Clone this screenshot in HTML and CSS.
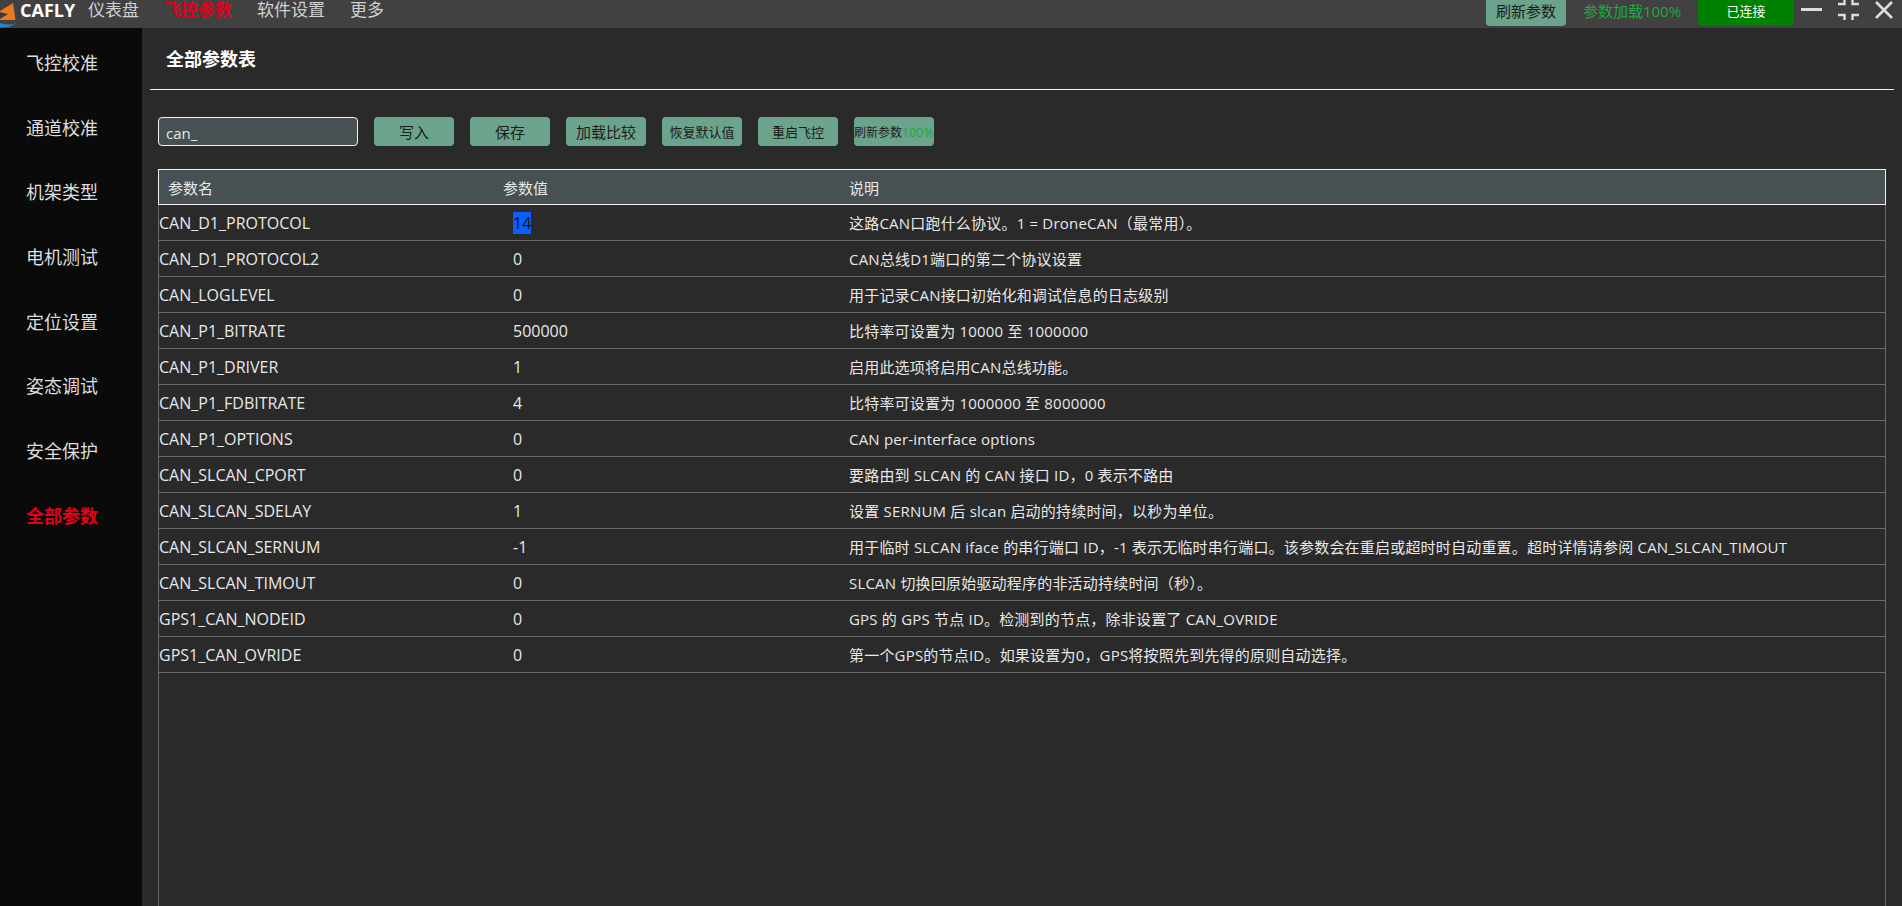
FILE: index.html
```html
<!DOCTYPE html>
<html lang="zh-CN">
<head>
  <meta charset="UTF-8">
  <title>CAFLY</title>
  <link rel="stylesheet" href="styles.css">
</head>
<body>
  <div class="top-bar">
    <div class="logo">
      <svg class="logo-mark" width="16" height="28" viewBox="0 0 16 28">
        <path d="M13 3 L15.5 20 L0 20 L0 18 L7 14 L0 12 L0 11 Z" fill="#e8791f"/>
        <path d="M0 13 L8 14 L0 19 Z" fill="#3b3b3b"/>
        <path d="M0 23 Q9 26 16 23 Q10 28 0 27.5 Z" fill="#1f86c4"/>
      </svg>
      <span>CAFLY</span>
    </div>
    <div class="top-nav">
      <span>仪表盘</span>
      <span class="active">飞控参数</span>
      <span>软件设置</span>
      <span>更多</span>
    </div>
    <div class="top-right">
      <div class="refresh-btn">刷新参数</div>
      <div class="load-status">参数加载100%</div>
      <div class="connected">已连接</div>
      <div class="win-btns">
        <svg width="21" height="20" viewBox="0 0 21 20"><path d="M0 9.5H21" stroke="#dcdcdc" stroke-width="3" fill="none"/></svg>
        <svg width="22" height="20" viewBox="0 0 22 20"><path d="M0 4H6.5V0M21 4H14.5V0M0 15H6.5V20M21 15H14.5V20" stroke="#dcdcdc" stroke-width="2.4" fill="none"/></svg>
        <svg width="18" height="20" viewBox="0 0 18 20"><path d="M1 2L17 18M17 2L1 18" stroke="#dcdcdc" stroke-width="2.6" fill="none"/></svg>
      </div>
    </div>
  </div>

  <div class="body-row">
    <div class="side-nav">
      <div class="side-item">飞控校准</div>
      <div class="side-item">通道校准</div>
      <div class="side-item">机架类型</div>
      <div class="side-item">电机测试</div>
      <div class="side-item">定位设置</div>
      <div class="side-item">姿态调试</div>
      <div class="side-item">安全保护</div>
      <div class="side-item active">全部参数</div>
    </div>

    <div class="content">
      <div class="page-title">全部参数表</div>
      <div class="tool-row">
        <input class="search" type="text" value="can_">
        <button class="tool-btn">写入</button>
        <button class="tool-btn">保存</button>
        <button class="tool-btn">加载比较</button>
        <button class="tool-btn small">恢复默认值</button>
        <button class="tool-btn small">重启飞控</button>
        <button class="tool-btn tiny">刷新参数<span class="pct">100%</span></button>
      </div>

      <div class="table-box">
        <table class="param-table">
          <thead>
            <tr><th class="col-name">参数名</th><th class="col-value">参数值</th><th>说明</th></tr>
          </thead>
          <tbody>
            <tr><td>CAN_D1_PROTOCOL</td><td class="val"><span class="picked">14</span></td><td class="desc">这路CAN口跑什么协议。1 = DroneCAN（最常用）。</td></tr>
            <tr><td>CAN_D1_PROTOCOL2</td><td class="val">0</td><td class="desc">CAN总线D1端口的第二个协议设置</td></tr>
            <tr><td>CAN_LOGLEVEL</td><td class="val">0</td><td class="desc">用于记录CAN接口初始化和调试信息的日志级别</td></tr>
            <tr><td>CAN_P1_BITRATE</td><td class="val">500000</td><td class="desc">比特率可设置为 10000 至 1000000</td></tr>
            <tr><td>CAN_P1_DRIVER</td><td class="val">1</td><td class="desc">启用此选项将启用CAN总线功能。</td></tr>
            <tr><td>CAN_P1_FDBITRATE</td><td class="val">4</td><td class="desc">比特率可设置为 1000000 至 8000000</td></tr>
            <tr><td>CAN_P1_OPTIONS</td><td class="val">0</td><td class="desc">CAN per-interface options</td></tr>
            <tr><td>CAN_SLCAN_CPORT</td><td class="val">0</td><td class="desc">要路由到 SLCAN 的 CAN 接口 ID，0 表示不路由</td></tr>
            <tr><td>CAN_SLCAN_SDELAY</td><td class="val">1</td><td class="desc">设置 SERNUM 后 slcan 启动的持续时间，以秒为单位。</td></tr>
            <tr><td>CAN_SLCAN_SERNUM</td><td class="val">-1</td><td class="desc">用于临时 SLCAN iface 的串行端口 ID，-1 表示无临时串行端口。该参数会在重启或超时时自动重置。超时详情请参阅 CAN_SLCAN_TIMOUT</td></tr>
            <tr><td>CAN_SLCAN_TIMOUT</td><td class="val">0</td><td class="desc">SLCAN 切换回原始驱动程序的非活动持续时间（秒）。</td></tr>
            <tr><td>GPS1_CAN_NODEID</td><td class="val">0</td><td class="desc">GPS 的 GPS 节点 ID。检测到的节点，除非设置了 CAN_OVRIDE</td></tr>
            <tr><td>GPS1_CAN_OVRIDE</td><td class="val">0</td><td class="desc">第一个GPS的节点ID。如果设置为0，GPS将按照先到先得的原则自动选择。</td></tr>
          </tbody>
        </table>
      </div>
    </div>
  </div>
</body>
</html>
```

FILE: styles.css
```css
html, body {
  margin: 0;
  padding: 0;
  height: 100%;
  overflow: hidden;
}
body {
  font-family: "Open Sans", "Noto Sans CJK SC", sans-serif;
  font-size: 15px;
  color: #e8e8e8;
  background: #2a2a2a;
  display: flex;
  flex-direction: column;
}

/* top bar */
.top-bar {
  height: 28px;
  flex-shrink: 0;
  background: #414141;
  display: flex;
  align-items: flex-start;
}
.logo {
  display: flex;
  gap: 4px;
  width: 88px;
  height: 28px;
  font-size: 18px;
  line-height: 20px;
  font-weight: 700;
  color: #fff;
}
.logo-mark { flex-shrink: 0; }
.top-nav {
  display: flex;
  gap: 25px;
  font-size: 17px;
  color: #d0d0d0;
  line-height: 20px;
}
.top-nav .active {
  color: #e3001b;
  font-weight: 700;
}
.top-right {
  margin-left: auto;
  display: flex;
  align-items: flex-start;
  height: 28px;
}
.refresh-btn {
  width: 80px;
  height: 26px;
  line-height: 22px;
  text-align: center;
  background: #6ba38c;
  color: #1c1c1c;
  border-radius: 0 0 4px 4px;
}
.load-status {
  width: 132px;
  height: 26px;
  line-height: 22px;
  text-align: center;
  color: #1ea83c;
}
.connected {
  width: 96px;
  height: 26px;
  line-height: 22px;
  text-align: center;
  font-size: 13px;
  background: #008000;
  color: #fff;
  border-radius: 0 0 4px 4px;
}
.win-btns {
  width: 108px;
  display: flex;
  justify-content: space-between;
  padding: 0 9px 0 7px;
  box-sizing: border-box;
}

/* side nav */
.body-row {
  flex: 1;
  display: flex;
  min-height: 0;
}
.side-nav {
  width: 142px;
  flex-shrink: 0;
  background: #0a0a0a;
  padding-top: 12px;
  box-sizing: border-box;
}
.side-item {
  height: 64.7px;
  line-height: 46px;
  padding-left: 26px;
  font-size: 18px;
  color: #dedede;
}
.side-item.active {
  color: #e3001b;
  font-weight: 700;
}

/* main area */
.content {
  flex: 1;
  min-width: 0;
  display: flex;
  flex-direction: column;
  padding-left: 8px;
  padding-right: 8px;
}
.page-title {
  height: 62px;
  line-height: 62px;
  padding-left: 16px;
  font-size: 18px;
  font-weight: 700;
  color: #fff;
  border-bottom: 1px solid #f0f0f0;
  box-sizing: border-box;
}
.tool-row {
  display: flex;
  gap: 16px;
  margin: 27px 0 23px 8px;
}
.search {
  width: 200px;
  height: 29px;
  box-sizing: border-box;
  padding: 2px 7px 0;
  background: #475053;
  border: 1px solid #f0f0f0;
  border-radius: 4px;
  color: #e8e8e8;
  font: 15px "Open Sans", "Noto Sans CJK SC", sans-serif;
  outline: none;
}
.tool-btn {
  width: 80px;
  height: 29px;
  padding: 0;
  border: none;
  border-radius: 4px;
  background: #6ba38c;
  color: #1c1c1c;
  font: 15px "Open Sans", "Noto Sans CJK SC", sans-serif;
  white-space: nowrap;
}
.tool-btn.small { font-size: 13px; }
.tool-btn.tiny { font-size: 12px; text-align: left; }
.pct { color: #1ea83c; font-size: 12px; letter-spacing: .3px; }

/* table */
.table-box {
  flex: 1;
  margin: 0 8px;
  border-left: 1px solid #6b6b6b;
  border-right: 1px solid #6b6b6b;
  min-height: 0;
}
.param-table {
  width: calc(100% + 2px);
  margin: 0 -1px;
  table-layout: fixed;
  border-collapse: separate;
  border-spacing: 0;
}
.param-table th {
  height: 36px;
  box-sizing: border-box;
  padding: 0 0 0 8px;
  text-align: left;
  font-weight: 400;
  background: #475053;
  border-top: 1px solid #f0f0f0;
  border-bottom: 1px solid #f0f0f0;
}
.param-table th:first-child { border-left: 1px solid #f0f0f0; padding-left: 9px; }
.param-table th:last-child { border-right: 1px solid #f0f0f0; }
.col-name { width: 337px; }
.col-value { width: 346px; }
.param-table td {
  height: 36px;
  box-sizing: border-box;
  padding: 0 0 0 1px;
  border-bottom: 1px solid #6b6b6b;
  white-space: nowrap;
  font-size: 16px;
}
.param-table td.val { padding-left: 18px; }
.param-table td.desc { padding-left: 8px; font-size: 15px; letter-spacing: .2px; }
.picked {
  background: #0a60ff;
  color: #101010;
}
```
